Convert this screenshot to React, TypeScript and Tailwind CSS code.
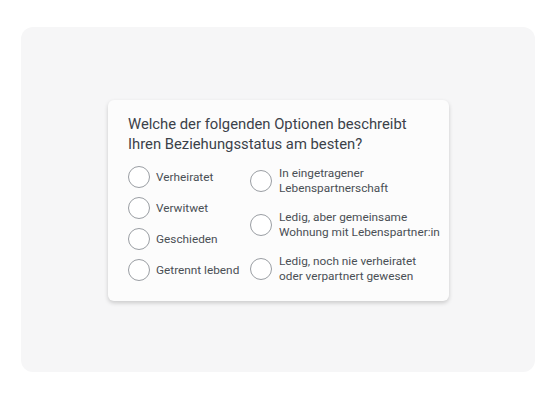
import React from 'react';

const left = ['Verheiratet', 'Verwitwet', 'Geschieden', 'Getrennt lebend'];
const right = [
  ['In eingetragener', 'Lebenspartnerschaft'],
  ['Ledig, aber gemeinsame', 'Wohnung mit Lebenspartner:in'],
  ['Ledig, noch nie verheiratet', 'oder verpartnert gewesen'],
];

const Radio = () => (
  <span className="block w-[22px] h-[22px] shrink-0 rounded-full border border-[#9a9ea3] bg-white" />
);

export default function App() {
  return (
    <div className="w-[557px] h-[400px] bg-white pt-[27px] pl-[21px]" style={{ fontFamily: 'Roboto, "Noto Sans", sans-serif' }}>
      <div className="w-[514px] h-[345px] rounded-[12px] bg-[#f6f6f7] pt-[73px] pl-[87px]">
        <div className="w-[341px] rounded-[6px] bg-[#fcfcfc] shadow-[0_2px_4px_rgba(0,0,0,0.18)] pl-5 pt-[14px] pb-[17px]">
          <h1 className="text-[14.8px] leading-[20px] text-[#3b4149]">
            Welche der folgenden Optionen beschreibt
            <br />
            Ihren Beziehungsstatus am besten?
          </h1>
          <div className="mt-[12px] flex text-[11.8px] leading-[15px] text-[#4a4f55]">
            <div className="w-[122px] shrink-0 flex flex-col gap-[9px]">
              {left.map((l) => (
                <div key={l} className="flex items-center gap-[6px]">
                  <Radio />
                  <span className="whitespace-nowrap">{l}</span>
                </div>
              ))}
            </div>
            <div className="flex flex-col gap-[14px]">
              {right.map((r) => (
                <div key={r[0]} className="flex items-center gap-[7px]">
                  <Radio />
                  <span className="whitespace-nowrap">
                    {r[0]}
                    <br />
                    {r[1]}
                  </span>
                </div>
              ))}
            </div>
          </div>
        </div>
      </div>
    </div>
  );
}
